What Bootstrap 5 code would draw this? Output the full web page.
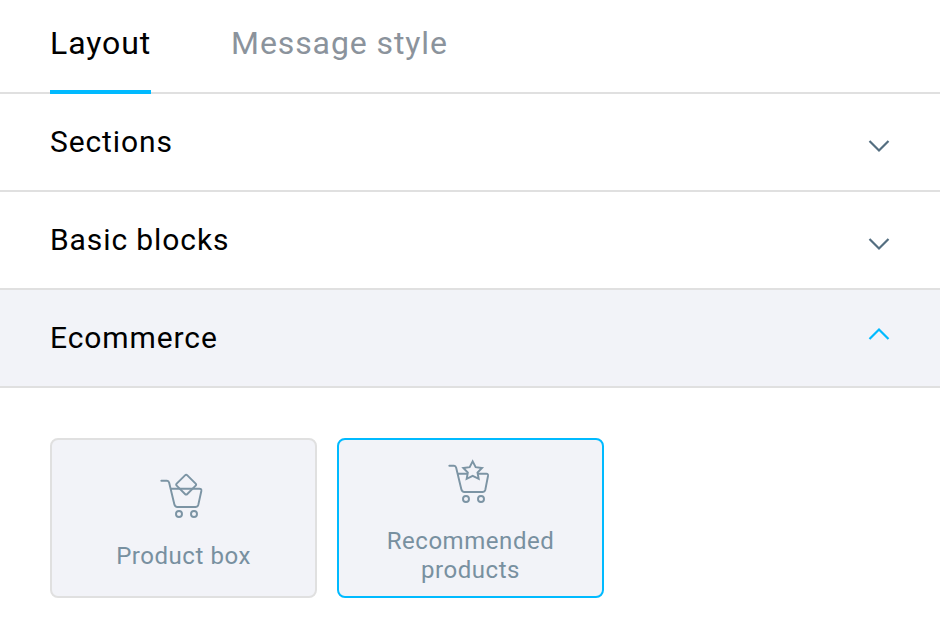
<!DOCTYPE html>
<html lang="en">
<head>
<meta charset="utf-8">
<meta name="viewport" content="width=device-width, initial-scale=1">
<title>Layout</title>
<link href="https://cdn.jsdelivr.net/npm/bootstrap@5.3.0/dist/css/bootstrap.min.css" rel="stylesheet">
<style>
body { font-family: Roboto, "Liberation Sans", sans-serif; background: #fff; color: #000; overflow: hidden; }
.editor-tabs { height: 94px; padding: 0 50px; gap: 80px; border-bottom: 2px solid #e0e0e0; }
.editor-tabs .nav-link { height: 94px; padding: 24px 0 0; font-size: 32px; line-height: 38px; letter-spacing: .9px; color: #8b939c; border: 0; border-bottom: 4px solid transparent; border-radius: 0; }
.editor-tabs .nav-link.active { color: #000; border-bottom-color: #00baff; }
.panel-head { height: 98px; padding: 0 50px; background: #fff; border: 0; border-bottom: 2px solid #e0e0e0; font-size: 30px; line-height: 36px; letter-spacing: .9px; color: #000; }
.panel-head.open { background: #f2f3f8; }
.chevron { fill: none; stroke: #546e80; stroke-width: 2.2; margin-top: 8px; }
.open .chevron { stroke: #00baff; margin-top: -8px; }
.tiles { padding: 50px; gap: 20px; }
.tile { width: 267px; height: 160px; padding: 0 24px; gap: 17px; background: #f2f3f8; border: 2px solid #e0e0e0; border-radius: 8px; color: #7890a0; font-size: 24px; line-height: 29px; letter-spacing: .55px; }
.tile.selected { border-color: #00baff; padding-bottom: 1px; }
.tile svg { fill: none; stroke: #7c94a4; stroke-width: 5.8; stroke-linecap: round; stroke-linejoin: round; }
.tile .star { fill: #f2f3f8; stroke-linejoin: miter; }
</style>
</head>
<body>
<nav class="nav editor-tabs flex-nowrap">
  <a class="nav-link active" href="#">Layout</a>
  <a class="nav-link" href="#">Message style</a>
</nav>
<main>
  <button class="panel-head d-flex w-100 align-items-center justify-content-between text-start" type="button">Sections
    <svg class="chevron" width="22" height="14" viewBox="0 0 22 14"><path d="M1.500 2 11 11.500 20.500 2"/></svg>
  </button>
  <button class="panel-head d-flex w-100 align-items-center justify-content-between text-start" type="button">Basic blocks
    <svg class="chevron" width="22" height="14" viewBox="0 0 22 14"><path d="M1.500 2 11 11.500 20.500 2"/></svg>
  </button>
  <button class="panel-head open d-flex w-100 align-items-center justify-content-between text-start" type="button">Ecommerce
    <svg class="chevron" width="22" height="14" viewBox="0 0 22 14"><path d="M1.500 12 11 2.500 20.500 12"/></svg>
  </button>
  <div class="tiles d-flex">
    <div class="tile d-flex flex-column align-items-center justify-content-center text-center">
      <svg class="flex-shrink-0" width="64" height="60" viewBox="6 0 192 180">
        <path d="M34 47H51Q56 47 57.500 53L73 118Q75 126 82 126H136Q143 126 145 119L154 78Q155 71 148 71H62"/>
        <path d="M105 31Q108.500 27.500 112 31L137 56Q140 59 137 62L112 87Q108.500 90.500 105 87L80 62Q77 59 80 56Z"/>
        <circle cx="87" cy="147" r="9"/><circle cx="132" cy="147" r="9"/>
      </svg>
      <span>Product box</span>
    </div>
    <div class="tile selected d-flex flex-column align-items-center justify-content-center text-center">
      <svg class="flex-shrink-0" width="64" height="60" viewBox="3 0 192 180">
        <path d="M34 47H48Q53 47 54.500 53L70 118Q72 126 79 126H133Q140 126 142 119L150 78Q151 71 145 71H59"/>
        <path class="star" d="M104 34 113 51.500 132 54 118.500 67.500 122 86.500 104 77.500 86 86.500 89.500 67.500 76 54 95 51.500Z"/>
        <circle cx="84" cy="147" r="9"/><circle cx="129" cy="147" r="9"/>
      </svg>
      <span>Recommended products</span>
    </div>
  </div>
</main>
<script src="https://cdn.jsdelivr.net/npm/bootstrap@5.3.0/dist/js/bootstrap.bundle.min.js"></script>
</body>
</html>
